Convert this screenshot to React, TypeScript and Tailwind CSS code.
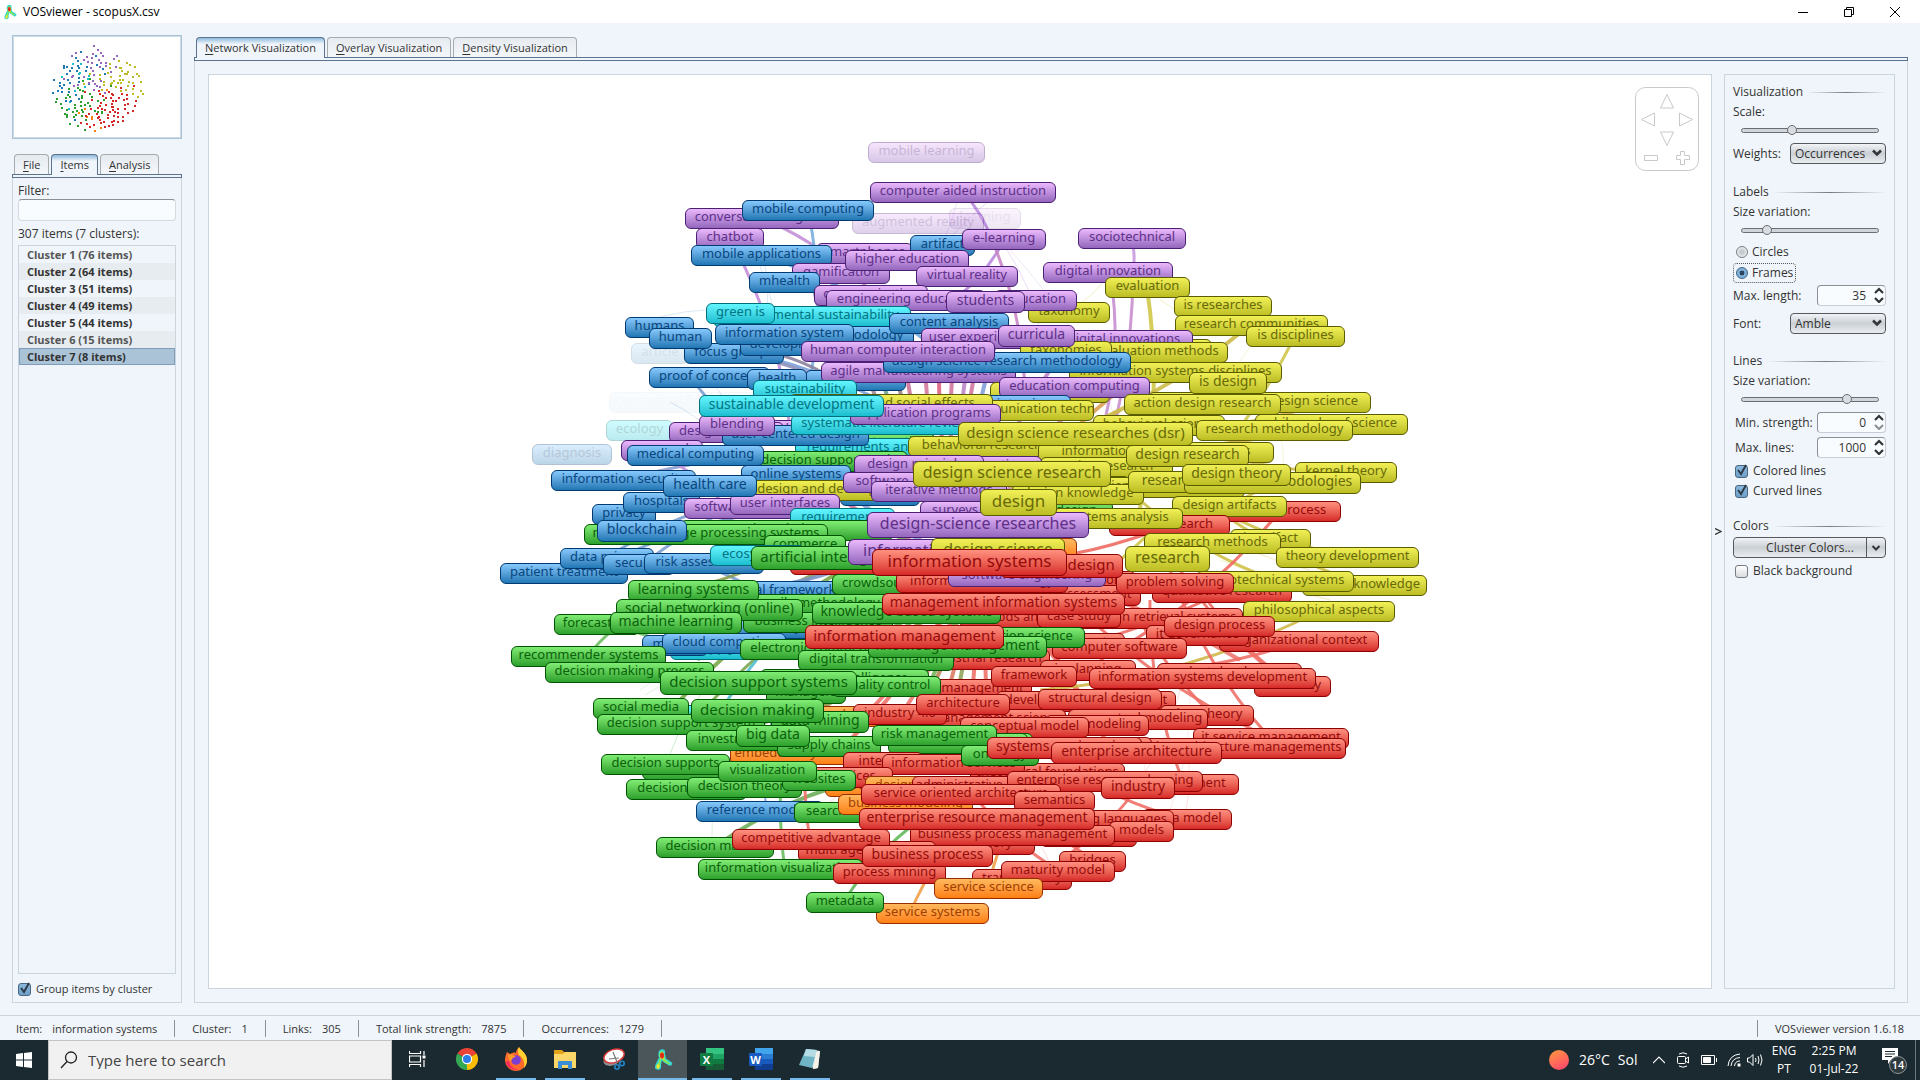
import React from "react";

type Color = "p" | "b" | "c" | "y" | "g" | "r" | "o";
type Tag = [Color, number, number, number, string, number?, number?];

const TONE: Record<Color, string> = {
  p: "from-[#ebb9fc] to-[#9467bd] border-[#4b1f74] text-[#5f3089]",
  b: "from-[#86c9fd] to-[#1f77b4] border-[#003a70] text-[#09467e]",
  c: "from-[#62f6ff] to-[#17becf] border-[#006f7c] text-[#007583]",
  y: "from-[#f1f056] to-[#bcbd22] border-[#5a5c00] text-[#686a08]",
  g: "from-[#80ee74] to-[#2ca02c] border-[#005300] text-[#0a620a]",
  r: "from-[#ff9080] to-[#d62728] border-[#8c0000] text-[#960b0b]",
  o: "from-[#ffb95c] to-[#ff7f0e] border-[#963000] text-[#a04000]",
};

const DOT: Record<Color, string> = {
  p: "#9467bd", b: "#1f77b4", c: "#17becf", y: "#bcbd22", g: "#2ca02c", r: "#d62728", o: "#ff7f0e",
};

const SIZE: Record<number, string> = {
  13: "h-[21px] text-[13px]",
  14: "h-[22px] text-[14px]",
  15: "h-[24px] text-[15px]",
  16: "h-[26px] text-[16px]",
  17: "h-[27px] text-[17px]",
};

const TAGS: Tag[] = [
  ["p", 388, 12, 117, "mobile learning", 13, 0.36],
  ["p", 469, 78, 72, "learning", 13, 0.15],
  ["p", 372, 83, 132, "augmented reality", 13, 0.3],
  ["b", 151, 213, 58, "article", 13, 0.17],
  ["b", 129, 262, 150, "conceptual framework", 13, 0.04],
  ["c", 126, 290, 67, "ecology", 13, 0.3],
  ["b", 52, 314, 80, "diagnosis", 13, 0.3],
  ["p", 336, 113, 97, "smartphones"],
  ["p", 205, 78, 154, "conversational agents"],
  ["b", 262, 70, 132, "mobile computing"],
  ["p", 390, 52, 186, "computer aided instruction"],
  ["p", 216, 98, 68, "chatbot"],
  ["b", 211, 115, 141, "mobile applications"],
  ["p", 312, 133, 98, "gamification"],
  ["b", 269, 142, 71, "mhealth"],
  ["b", 430, 105, 65, "artifact"],
  ["p", 365, 120, 124, "higher education"],
  ["p", 482, 99, 84, "e-learning"],
  ["p", 436, 136, 102, "virtual reality"],
  ["p", 334, 155, 114, "communication"],
  ["p", 346, 160, 160, "engineering education"],
  ["p", 598, 98, 108, "sociotechnical"],
  ["p", 563, 132, 130, "digital innovation"],
  ["y", 548, 172, 82, "taxonomy"],
  ["p", 514, 160, 83, "education"],
  ["p", 466, 161, 79, "students", 14],
  ["y", 625, 147, 85, "evaluation"],
  ["y", 694, 166, 98, "is researches"],
  ["y", 695, 185, 153, "research communities"],
  ["y", 766, 196, 99, "is disciplines"],
  ["c", 233, 176, 198, "environmental sustainability"],
  ["c", 226, 173, 69, "green is"],
  ["b", 145, 187, 69, "humans"],
  ["b", 204, 213, 100, "focus groups"],
  ["b", 169, 198, 63, "human"],
  ["b", 260, 205, 100, "development"],
  ["b", 331, 196, 103, "methodology"],
  ["b", 235, 194, 139, "information system"],
  ["b", 409, 183, 120, "content analysis"],
  ["p", 441, 198, 113, "user experience"],
  ["y", 650, 209, 82, "methods"],
  ["p", 575, 200, 138, "digital innovations"],
  ["y", 608, 212, 140, "evaluation methods"],
  ["y", 540, 211, 92, "taxonomies"],
  ["p", 518, 195, 77, "curricula", 14],
  ["y", 589, 232, 213, "information systems disciplines"],
  ["b", 325, 240, 101, "co-creation"],
  ["p", 341, 232, 195, "agile manufacturing systems"],
  ["y", 510, 252, 120, "technology"],
  ["p", 519, 247, 151, "education computing"],
  ["b", 403, 222, 248, "design science research methodology"],
  ["p", 321, 211, 194, "human computer interaction"],
  ["b", 169, 237, 121, "proof of concept"],
  ["b", 267, 239, 60, "health"],
  ["c", 273, 250, 104, "sustainability"],
  ["b", 505, 265, 86, "interviews"],
  ["y", 709, 242, 78, "is design", 14],
  ["y", 380, 270, 234, "information and communication techn"],
  ["y", 309, 264, 204, "economic and social effects"],
  ["p", 290, 290, 127, "design processes"],
  ["p", 189, 292, 115, "design thinking"],
  ["g", 370, 303, 85, "automation"],
  ["c", 315, 308, 158, "requirements analysis"],
  ["b", 242, 295, 147, "user centered design"],
  ["c", 311, 284, 188, "systematic literature review"],
  ["p", 370, 274, 151, "application programs"],
  ["c", 219, 265, 185, "sustainable development", 14],
  ["y", 668, 262, 150, "theory"],
  ["y", 776, 262, 115, "design science"],
  ["y", 644, 264, 157, "action design research"],
  ["y", 613, 285, 132, "behavioral science"],
  ["y", 775, 284, 153, "philosophy of science"],
  ["y", 716, 290, 157, "research methodology"],
  ["y", 478, 292, 235, "design science researches (dsr)", 15],
  ["p", 219, 285, 76, "blending"],
  ["p", 141, 310, 82, "proposal"],
  ["g", 270, 321, 158, "decision support tools"],
  ["b", 147, 315, 137, "medical computing"],
  ["y", 428, 306, 148, "behavioral research"],
  ["y", 558, 312, 236, "information systems strategies"],
  ["y", 560, 327, 133, "action research"],
  ["y", 560, 346, 90, "theory"],
  ["y", 560, 347, 205, "design science research (dsr)"],
  ["p", 462, 326, 100, "interaction"],
  ["p", 374, 325, 130, "design principles"],
  ["y", 646, 315, 123, "design research", 14],
  ["y", 815, 332, 102, "kernel theory"],
  ["y", 648, 341, 84, "research", 14],
  ["y", 704, 342, 177, "research methodologies", 14],
  ["y", 702, 334, 109, "design theory", 14],
  ["b", 261, 335, 110, "online systems"],
  ["b", 71, 340, 145, "information security"],
  ["b", 360, 355, 80, "innovation"],
  ["y", 267, 350, 172, "design and development"],
  ["b", 183, 345, 94, "health care", 14],
  ["p", 363, 342, 78, "software"],
  ["p", 391, 351, 136, "iterative methods"],
  ["y", 433, 331, 198, "design science research", 16],
  ["b", 112, 374, 64, "privacy"],
  ["b", 143, 362, 77, "hospitals"],
  ["p", 204, 368, 118, "software design"],
  ["p", 250, 364, 110, "user interfaces"],
  ["p", 440, 371, 70, "surveys"],
  ["g", 560, 371, 73, "design"],
  ["y", 532, 354, 132, "design knowledge"],
  ["r", 740, 371, 121, "design process"],
  ["y", 692, 366, 115, "design artifacts"],
  ["r", 629, 385, 121, "basic research"],
  ["y", 573, 378, 130, "systems analysis"],
  ["y", 500, 359, 77, "design", 17],
  ["c", 310, 378, 105, "requirements"],
  ["g", 200, 390, 213, "knowledge"],
  ["g", 104, 394, 244, "natural language processing systems"],
  ["b", 117, 390, 90, "blockchain", 14],
  ["g", 284, 405, 82, "commerce"],
  ["p", 387, 382, 222, "design-science researches", 16],
  ["y", 750, 399, 81, "it artifact"],
  ["y", 664, 403, 137, "research methods"],
  ["y", 796, 417, 143, "theory development"],
  ["y", 645, 416, 85, "research", 16],
  ["b", 20, 433, 128, "patient treatment"],
  ["b", 80, 418, 94, "data privacy"],
  ["b", 123, 424, 72, "security"],
  ["b", 164, 423, 120, "risk assessment"],
  ["c", 230, 415, 95, "ecosystems"],
  ["r", 310, 424, 120, "project"],
  ["g", 271, 416, 160, "artificial intelligence", 15],
  ["p", 368, 409, 150, "information use", 16],
  ["o", 520, 408, 77, "services"],
  ["y", 451, 408, 134, "design science", 16],
  ["r", 520, 424, 123, "product design", 15],
  ["r", 392, 419, 195, "information systems", 17],
  ["y", 822, 445, 125, "design knowledge"],
  ["r", 672, 452, 140, "qualitative research"],
  ["y", 716, 441, 158, "sociotechnical systems"],
  ["r", 560, 441, 96, "integration"],
  ["r", 570, 455, 91, "assessment"],
  ["r", 636, 443, 118, "problem solving"],
  ["y", 763, 471, 152, "philosophical aspects"],
  ["b", 207, 451, 160, "conceptual framework"],
  ["g", 270, 464, 145, "agile methodology"],
  ["g", 352, 444, 110, "crowdsourcing"],
  ["g", 148, 450, 131, "learning systems", 14],
  ["r", 416, 442, 172, "information technology"],
  ["p", 468, 436, 158, "software engineering"],
  ["b", 250, 488, 130, "analytics"],
  ["g", 263, 482, 150, "business intelligence"],
  ["g", 136, 469, 187, "social networking (online)", 14],
  ["g", 74, 484, 86, "forecasting"],
  ["g", 130, 482, 132, "machine learning", 14],
  ["r", 571, 478, 192, "information retrieval systems"],
  ["r", 480, 478, 140, "methods and models"],
  ["r", 557, 477, 84, "case study"],
  ["g", 332, 472, 189, "knowledge based systems", 14],
  ["r", 402, 463, 243, "management information systems", 14],
  ["r", 739, 501, 160, "organizational context"],
  ["r", 666, 495, 103, "it governance"],
  ["r", 684, 486, 111, "design process"],
  ["r", 590, 503, 55, "costs"],
  ["r", 572, 508, 135, "computer software"],
  ["g", 460, 497, 145, "information science"],
  ["c", 190, 509, 90, "supply"],
  ["b", 162, 505, 66, "models"],
  ["b", 182, 503, 124, "cloud computing"],
  ["r", 440, 519, 130, "industrial research"],
  ["g", 260, 509, 148, "electronic commerce"],
  ["g", 318, 520, 156, "digital transformation"],
  ["g", 388, 506, 179, "knowledge management", 14],
  ["r", 325, 495, 199, "information management", 15],
  ["g", 31, 516, 155, "recommender systems"],
  ["g", 65, 532, 169, "decision making process"],
  ["r", 560, 530, 96, "is planning"],
  ["r", 774, 546, 77, "efficiency"],
  ["r", 677, 533, 145, "product development"],
  ["r", 609, 538, 227, "information systems development"],
  ["r", 453, 549, 99, "management"],
  ["g", 286, 553, 80, "managers"],
  ["g", 280, 539, 169, "business intelligence"],
  ["g", 352, 546, 109, "quality control"],
  ["r", 511, 536, 86, "framework"],
  ["r", 516, 561, 180, "development environment"],
  ["r", 558, 559, 124, "structural design"],
  ["r", 446, 579, 140, "management science"],
  ["r", 680, 575, 94, "data theory"],
  ["r", 588, 579, 140, "conceptual modeling"],
  ["r", 565, 585, 104, "data modeling"],
  ["r", 480, 587, 129, "conceptual model"],
  ["o", 330, 576, 70, "value"],
  ["r", 373, 574, 94, "industry 4.0"],
  ["r", 436, 564, 94, "architecture"],
  ["g", 180, 541, 197, "decision support systems", 15],
  ["c", 195, 575, 60, "cities"],
  ["g", 113, 568, 96, "social media"],
  ["g", 117, 584, 168, "decision support system"],
  ["o", 250, 614, 128, "embedded systems"],
  ["g", 206, 600, 98, "investments"],
  ["g", 297, 606, 104, "supply chains"],
  ["g", 291, 581, 98, "data mining", 14],
  ["g", 256, 595, 74, "big data", 14],
  ["g", 211, 569, 133, "decision making", 15],
  ["g", 480, 603, 73, "trust"],
  ["g", 408, 603, 140, "risk analysis"],
  ["g", 392, 595, 125, "risk management"],
  ["r", 713, 598, 156, "it service management"],
  ["r", 625, 608, 241, "enterprise architecture managements"],
  ["r", 590, 607, 82, "standards"],
  ["r", 490, 633, 155, "theoretical foundations"],
  ["r", 363, 622, 80, "internet"],
  ["r", 402, 624, 143, "information services"],
  ["g", 481, 615, 78, "ontology"],
  ["r", 507, 607, 155, "systems engineering", 14],
  ["r", 571, 612, 171, "enterprise architecture", 14],
  ["g", 162, 629, 90, "websites"],
  ["g", 121, 624, 129, "decision supports"],
  ["g", 146, 649, 121, "decision models"],
  ["g", 207, 647, 115, "decision theory"],
  ["o", 345, 646, 70, "tools"],
  ["r", 330, 637, 83, "services"],
  ["g", 302, 640, 74, "websites"],
  ["g", 238, 631, 99, "visualization"],
  ["o", 385, 646, 80, "designing"],
  ["r", 432, 646, 125, "administrative data"],
  ["r", 650, 644, 109, "management"],
  ["r", 527, 641, 196, "enterprise resource planning"],
  ["r", 621, 647, 74, "industry", 14],
  ["b", 216, 671, 128, "reference models"],
  ["g", 314, 672, 116, "search engines"],
  ["o", 358, 664, 135, "business modeling"],
  ["r", 381, 654, 200, "service oriented architecture"],
  ["r", 534, 661, 81, "semantics"],
  ["r", 662, 679, 90, "data model"],
  ["r", 555, 680, 139, "modeling languages"],
  ["r", 560, 696, 97, "ontologies"],
  ["r", 629, 691, 65, "models"],
  ["r", 470, 704, 85, "theory"],
  ["r", 430, 695, 205, "business process management"],
  ["r", 379, 678, 236, "enterprise resource management", 14],
  ["g", 176, 707, 118, "decision makers"],
  ["r", 318, 711, 138, "multi agent systems"],
  ["r", 252, 699, 158, "competitive advantage"],
  ["g", 218, 729, 165, "information visualization"],
  ["r", 353, 733, 113, "process mining"],
  ["r", 382, 715, 131, "business process", 14],
  ["r", 579, 721, 67, "bridges"],
  ["r", 492, 739, 100, "transparency"],
  ["r", 521, 731, 114, "maturity model"],
  ["o", 454, 748, 109, "service science"],
  ["o", 396, 773, 113, "service systems"],
  ["g", 326, 762, 78, "metadata"],
];

const BY_SIZE = [...TAGS].sort((a, b) => (a[5] ?? 13) - (b[5] ?? 13));

/* x1, y1, x2, y2, colour, width */
const LINKS: [number, number, number, number, string, number][] = [
  [282, 88, 400, 170, "#c48fd9", 3], [250, 108, 310, 300, "#c48fd9", 3], [328, 80, 330, 250, "#7aaedd", 3],
  [281, 125, 470, 230, "#6fa5d8", 3], [330, 150, 345, 260, "#8c9cc4", 3], [483, 62, 512, 110, "#b98be0", 3],
  [524, 110, 480, 165, "#b98be0", 3], [512, 110, 545, 270, "#c985c4", 3], [652, 110, 653, 142, "#c79ae0", 3],
  [653, 142, 600, 400, "#c98fce", 3], [630, 142, 625, 290, "#c88fd4", 3], [667, 158, 655, 400, "#cfc84a", 4],
  [742, 176, 600, 260, "#cdbb4a", 4], [770, 195, 540, 320, "#cdbb4a", 4], [815, 206, 640, 430, "#cfc84a", 3],
  [748, 253, 560, 310, "#cfae4a", 5], [850, 272, 560, 300, "#d6b052", 3], [851, 294, 560, 310, "#d6b052", 3],
  [866, 342, 700, 310, "#cfb84a", 3], [867, 427, 690, 350, "#cfc14a", 3], [884, 455, 700, 350, "#cfc14a", 3],
  [795, 450, 660, 370, "#cfc14a", 3], [839, 481, 560, 560, "#cfb84a", 3], [800, 381, 620, 530, "#ee6a62", 3],
  [690, 395, 490, 433, "#ee6a62", 3], [732, 413, 520, 350, "#cfb84a", 4], [690, 428, 800, 350, "#cfc14a", 3],
  [742, 462, 500, 530, "#ee6a62", 3], [819, 511, 640, 540, "#ef7068", 3], [812, 556, 700, 440, "#ef7068", 3],
  [790, 608, 690, 440, "#ef7068", 3], [820, 560, 720, 460, "#ef7068", 3], [732, 585, 640, 450, "#ef7068", 3],
  [790, 608, 560, 440, "#ef7068", 3], [704, 654, 670, 470, "#ef7068", 3], [707, 690, 560, 620, "#ef7068", 3],
  [660, 654, 580, 730, "#ef7068", 3], [613, 730, 480, 600, "#ef7068", 3], [578, 740, 490, 660, "#ef7068", 3],
  [365, 770, 440, 690, "#62b85a", 3], [430, 783, 500, 680, "#f0a04a", 3], [508, 758, 560, 640, "#f0a04a", 3],
  [235, 717, 380, 650, "#6fae5a", 4], [305, 740, 315, 560, "#6cc060", 3], [330, 710, 335, 560, "#ee7068", 3],
  [286, 680, 300, 560, "#7a9ad8", 2], [117, 494, 220, 530, "#6cc060", 3], [108, 526, 160, 480, "#6cc060", 3],
  [200, 570, 440, 400, "#79a848", 4], [215, 590, 420, 430, "#7aa850", 3], [235, 590, 380, 430, "#52bccc", 3],
  [110, 443, 300, 380, "#7c9fd0", 3], [127, 428, 260, 370, "#7c9fd0", 3], [163, 434, 420, 310, "#7c9fd0", 3],
  [220, 434, 330, 500, "#7c9fd0", 3], [143, 350, 400, 330, "#8c9cd0", 3], [180, 325, 240, 370, "#c48fd9", 3],
  [209, 248, 240, 290, "#7c9fd0", 3], [182, 210, 400, 270, "#7aa0d8", 3], [254, 222, 400, 280, "#8f8fb8", 3],
  [290, 222, 370, 260, "#8a83a0", 3], [345, 400, 200, 460, "#8a9f50", 3], [400, 400, 250, 480, "#8a9f50", 5],
  [425, 410, 270, 460, "#7b95c8", 4], [440, 410, 290, 470, "#9586a8", 3], [490, 430, 340, 440, "#b59a4a", 4],
];

const HUBS: [number, number, number, number, string][] = [
  [490, 433, 270, 600, "#6fae50"], [490, 433, 290, 610, "#8a9f50"], [490, 433, 300, 560, "#5fb955"],
  [490, 433, 250, 590, "#6fae50"], [490, 433, 310, 600, "#9a9450"], [490, 433, 445, 620, "#d8735a"],
  [490, 433, 460, 620, "#8a9f50"], [490, 433, 478, 640, "#ee6a62"], [490, 433, 430, 600, "#b58050"],
  [490, 433, 500, 640, "#ee6a62"], [490, 433, 520, 620, "#d8735a"], [490, 433, 370, 610, "#ee6a62"],
  [490, 433, 380, 590, "#ee6a62"], [490, 433, 400, 640, "#6fae50"], [490, 433, 410, 600, "#ee7068"],
  [490, 433, 590, 600, "#ee6a62"], [490, 433, 620, 600, "#ee6a62"], [490, 433, 640, 640, "#ee6a62"],
  [490, 433, 425, 230, "#c96a90"], [490, 433, 445, 230, "#d07098"], [490, 433, 460, 220, "#d85a78"],
  [490, 433, 475, 220, "#d07098"], [490, 433, 490, 220, "#b880c8"], [490, 433, 500, 220, "#d07098"],
  [490, 433, 520, 200, "#7a9ad8"], [490, 433, 570, 240, "#b880c8"], [490, 433, 400, 240, "#6aa08a"],
  [490, 433, 415, 235, "#9a7a80"], [490, 433, 380, 220, "#9a8090"], [490, 433, 610, 260, "#d080b0"],
  [490, 433, 640, 260, "#d89a4a"], [490, 433, 660, 330, "#d89a4a"], [490, 433, 690, 325, "#d8a04a"],
  [490, 433, 700, 350, "#d8a04a"], [490, 433, 690, 360, "#d8904a"], [490, 433, 640, 280, "#d8a04a"],
  [490, 433, 620, 290, "#d8a04a"], [490, 433, 330, 330, "#8c9cd0"], [490, 433, 350, 360, "#c96a90"],
  [490, 433, 320, 380, "#c98070"], [490, 433, 780, 380, "#d8a04a"], [490, 433, 760, 530, "#ef7068"],
];

const FAINT: [number, number, number, number, string][] = [
  [438, 153, 520, 62, "#ead9f5"], [477, 72, 435, 160, "#f0e2f8"], [527, 120, 560, 200, "#eadcf6"],
  [530, 120, 640, 300, "#f0e6f8"], [280, 136, 300, 240, "#dbe8f5"], [285, 136, 285, 190, "#dbe8f5"],
  [145, 200, 225, 180, "#dbe8f5"], [190, 272, 240, 310, "#dbe8f5"], [228, 250, 245, 270, "#dbe8f5"],
  [720, 200, 560, 260, "#f0efc0"], [680, 170, 700, 185, "#f0efc0"], [625, 150, 590, 180, "#f0efc0"],
  [770, 217, 690, 300, "#f6f5da"], [800, 300, 800, 370, "#f6f5da"], [850, 470, 700, 400, "#f3e9c0"],
  [830, 440, 700, 380, "#f3e9c0"], [870, 460, 740, 430, "#f6f0d0"], [700, 560, 660, 650, "#fbe0dc"],
  [710, 560, 690, 680, "#fbe9e6"], [660, 570, 660, 680, "#fbe9e6"], [706, 610, 706, 680, "#fbe0dc"],
  [160, 560, 200, 540, "#dff3dc"], [165, 565, 215, 545, "#dff3dc"], [190, 624, 240, 540, "#cdeccb"],
  [232, 707, 235, 680, "#dff3dc"], [205, 390, 300, 440, "#dfe8ee"], [210, 440, 330, 400, "#dfeedd"],
  [100, 505, 140, 480, "#e6f5e4"], [560, 715, 570, 735, "#fbdcd8"], [320, 700, 400, 640, "#fbe0dc"],
];

const curve = (x1: number, y1: number, x2: number, y2: number) =>
  `M${x1} ${y1}Q${(x1 + x2) / 2 + (y2 - y1) * 0.1} ${(y1 + y2) / 2 - (x2 - x1) * 0.1} ${x2} ${y2}`;

function NetworkMap() {
  return (
    <div className="relative h-[804px] w-[960px] shrink-0">
      <svg className="absolute inset-0 h-full w-full" viewBox="0 0 960 804" fill="none" aria-hidden="true">
        {FAINT.map(([a, b, c, d, s], i) => <path key={i} d={curve(a, b, c, d)} stroke={s} strokeWidth="1" />)}
        {HUBS.map(([a, b, c, d, s], i) => <path key={i} d={curve(a, b, c, d)} stroke={s} strokeWidth="4" opacity="0.85" />)}
        {LINKS.map(([a, b, c, d, s, w], i) => <path key={i} d={curve(a, b, c, d)} stroke={s} strokeWidth={w} opacity="0.9" />)}
      </svg>
      {BY_SIZE.map(([c, x, y, w, t, s = 13, o = 1], i) => (
        <div
          key={i}
          className={`absolute flex items-center justify-center rounded-md border bg-linear-to-b pb-[3px] font-['Noto_Sans',sans-serif] leading-none whitespace-nowrap ${TONE[c]} ${SIZE[s]}`}
          style={{ left: x, top: y, width: w, opacity: o }}
        >
          {t}
        </div>
      ))}
    </div>
  );
}

function Overview() {
  return (
    <svg className="h-[104px] w-full border border-[#a9c3d6] bg-white outline outline-[#cfdae3] -outline-offset-2" viewBox="12 35 168 102" shapeRendering="crispEdges" role="img" aria-label="Overview">
      {TAGS.map(([c, x, y, w], i) => (
        <rect key={i} x={Math.round(92 + (x + w / 2 - 446) * 0.112)} y={Math.round(44 + (y - 12) * 0.1117)} width="2" height="2" fill={DOT[c]} />
      ))}
    </svg>
  );
}

function Logo({ size }: { size: string }) {
  return (
    <svg className={size} viewBox="0 0 20 22" aria-hidden="true">
      <path d="M8 1c3-1 5 1 4 4l1 5 6 4c1 2-1 4-3 3l-5-3-2-2-1 4c1 4-1 6-4 5-3 0-2-4-1-6l3-6C5 6 5 2 8 1z" fill="#35d6d0" />
      <path d="M8 3c2-1 3 1 3 3l1 5 5 4-1 1-5-3-3-3-1 7c0 3-3 4-3 1l3-8C6 7 6 4 8 3z" fill="#8fe84a" />
      <path d="M8 4l2 0 1 5-1 2-3-2z" fill="#f6d21c" />
      <ellipse cx="9" cy="7" rx="2" ry="3" fill="#e02a1a" />
      <ellipse cx="5" cy="18" rx="1.6" ry="2.2" fill="#f2e52c" />
    </svg>
  );
}

function MainTab({ label, active }: { label: string; active?: boolean }) {
  return (
    <button
      role="tab"
      aria-selected={!!active}
      className={
        active
          ? "relative z-10 -mb-px h-[21px] rounded-t border border-b-0 border-[#5b738f] bg-linear-to-b from-[#8fbbdc] via-[#eff5fa] via-30% to-[#eff5fa] px-2"
          : "h-5 rounded-t border border-b-0 border-[#a6abb0] bg-linear-to-b from-[#e6ebf0] to-[#f4f7fa] px-2"
      }
    >
      <span className="underline underline-offset-2">{label[0]}</span>
      {label.slice(1)}
    </button>
  );
}

function Section({ title }: { title: string }) {
  return (
    <h2 className="flex h-5 items-center gap-1">
      {title}
      <span className="h-px flex-1 bg-linear-to-r from-transparent via-[#777c82] to-transparent" />
    </h2>
  );
}

function Range({ label, value }: { label: string; value: number }) {
  return (
    <label className="block">
      <span className="block h-5 leading-5">{label}</span>
      <span className="flex h-4 items-center pr-[7px] pl-2">
        <input
          type="range"
          defaultValue={value}
          className="h-[5px] w-full appearance-none rounded-full border border-[#6a6e74] bg-[#d0d5da] [&::-webkit-slider-thumb]:h-[10px] [&::-webkit-slider-thumb]:w-[10px] [&::-webkit-slider-thumb]:appearance-none [&::-webkit-slider-thumb]:rounded-full [&::-webkit-slider-thumb]:border [&::-webkit-slider-thumb]:border-[#6a6e74] [&::-webkit-slider-thumb]:bg-[#d9dde1]"
        />
      </span>
    </label>
  );
}

function Choice({ label, value }: { label: string; value: string }) {
  return (
    <label className="flex h-[21px] items-center justify-between">
      {label}
      <span className="relative">
        <select className="block h-[21px] w-24 appearance-none rounded border border-[#55595f] bg-linear-to-b from-[#f2f4f6] via-[#cbd0d5] to-[#e9edf0] pl-1 leading-none">
          <option>{value}</option>
        </select>
        <svg className="pointer-events-none absolute top-[6px] right-[3px] h-2 w-3" viewBox="0 0 12 8" fill="none" aria-hidden="true">
          <path d="M2 1.500l4 4 4-4" stroke="#33373c" strokeWidth="2.6" />
        </svg>
      </span>
    </label>
  );
}

function Spin({ label, value, low }: { label: string; value: string; low?: boolean }) {
  return (
    <label className="flex h-[21px] items-center justify-between">
      {label}
      <span className="relative">
        <input defaultValue={value} className="block h-[21px] w-[69px] rounded border border-[#c6ccd2] border-t-[#8b9096] border-l-[#8b9096] bg-[#f9fcff] pr-[19px] text-right" />
        <svg className="pointer-events-none absolute top-[2px] right-[2px] h-4 w-[10px]" viewBox="0 0 10 16" fill="none" strokeWidth="2.2" aria-hidden="true">
          <path d="M1 6l4-4 4 4" stroke="#303338" />
          <path d="M1 11l4 4 4-4" stroke={low ? "#8e9296" : "#303338"} />
        </svg>
      </span>
    </label>
  );
}

function Check({ label, checked }: { label: string; checked?: boolean }) {
  return (
    <label className="flex h-5 items-center gap-[5px]">
      <span className="relative flex">
        <input
          type="checkbox"
          defaultChecked={checked}
          className="h-[13px] w-[13px] appearance-none rounded-[3px] border border-[#777c82] bg-linear-to-b from-white to-[#d8dcdf] checked:border-[#47657f] checked:from-[#8ab8dc] checked:to-[#6d9fc8]"
        />
        {checked && (
          <svg className="pointer-events-none absolute -top-px left-[2px] h-3 w-[11px]" viewBox="0 0 11 12" fill="none" aria-hidden="true">
            <path d="M1 6l3 4 5-9" stroke="#2f3a46" strokeWidth="2" />
          </svg>
        )}
      </span>
      {label}
    </label>
  );
}

function Radio({ label, checked }: { label: string; checked?: boolean }) {
  return (
    <label className={checked ? "flex h-5 w-fit items-center gap-1 rounded-sm border border-dotted border-[#555] px-[2px]" : "flex h-[22px] items-center gap-1 pl-[3px]"}>
      <input
        type="radio"
        name="shape"
        defaultChecked={checked}
        className="h-3 w-3 shrink-0 appearance-none rounded-full border border-[#777c82] bg-[radial-gradient(circle,#c4c9cd_25%,#eceff1_70%)] checked:border-[#3f6486] checked:bg-[radial-gradient(circle,#2b4560_30%,#7fb0d8_38%)]"
      />
      {label}
    </label>
  );
}

function Controls() {
  return (
    <aside className="flex w-[171px] shrink-0 flex-col border border-[#cbd5de] px-2 pt-[7px]">
      <Section title="Visualization" />
      <Range label="Scale:" value={36} />
      <div className="mt-[5px]"><Choice label="Weights:" value="Occurrences" /></div>
      <div className="mt-[18px]"><Section title="Labels" /></div>
      <Range label="Size variation:" value={16} />
      <div className="mt-[3px]">
        <Radio label="Circles" />
        <Radio label="Frames" checked />
      </div>
      <div className="mt-[2px]"><Spin label="Max. length:" value="35" /></div>
      <div className="mt-[7px]"><Choice label="Font:" value="Amble" /></div>
      <div className="mt-[17px]"><Section title="Lines" /></div>
      <Range label="Size variation:" value={79} />
      <div className="mt-[5px] flex flex-col gap-1 pl-[2px]">
        <Spin label="Min. strength:" value="0" low />
        <Spin label="Max. lines:" value="1000" />
      </div>
      <div className="mt-[3px] pl-[2px]">
        <Check label="Colored lines" checked />
        <Check label="Curved lines" checked />
      </div>
      <div className="mt-[15px]"><Section title="Colors" /></div>
      <div className="mt-px flex h-[21px] rounded border border-[#55595f] bg-linear-to-b from-[#f2f4f6] via-[#cbd0d5] to-[#e9edf0]">
        <button className="flex-1 pl-5 leading-none">Cluster Colors...</button>
        <button className="flex w-[19px] items-center justify-center border-l border-[#55595f]" aria-label="More colors">
          <svg className="h-2 w-[10px]" viewBox="0 0 10 8" fill="none" aria-hidden="true"><path d="M1.500 2l3.500 3.500L8.500 2" stroke="#33373c" strokeWidth="2" /></svg>
        </button>
      </div>
      <div className="mt-[3px] pl-[2px]"><Check label="Black background" /></div>
    </aside>
  );
}

const CLUSTERS: [string, boolean][] = [
  ["Cluster 1 (76 items)", true], ["Cluster 2 (64 items)", false], ["Cluster 3 (51 items)", false],
  ["Cluster 4 (49 items)", false], ["Cluster 5 (44 items)", false], ["Cluster 6 (15 items)", true],
];

function Sidebar() {
  return (
    <div className="flex w-[170px] shrink-0 flex-col">
      <Overview />
      <div className="mt-[15px] flex h-5 items-end gap-[2px] pl-[2px] text-[11px]" role="tablist">
        <MainTab label="File" />
        <MainTab label="Items" active />
        <MainTab label="Analysis" />
      </div>
      <div className="h-1 border border-[#5b738f]" />
      <div className="flex flex-1 flex-col border border-t-0 border-[#cbd5de] px-[5px]">
        <label className="mt-1 block leading-[17px]">
          Filter:
          <input className="block h-[22px] w-full rounded border border-[#d4dadf] border-t-[#8b9096] bg-[#f8fcff]" />
        </label>
        <div className="mt-[3px] h-[21px] leading-5">307 items (7 clusters):</div>
        <ul className="mb-[5px] flex-1 border border-[#cbd5de] text-[11px] font-bold">
          {CLUSTERS.map(([t, dim], i) => (
            <li key={t} className={`h-[17px] pl-2 leading-[17px] ${i % 2 ? "bg-[#e6ecf0]" : ""} ${dim ? "text-[#555]" : "text-[#333]"}`}>{t}</li>
          ))}
          <li className="h-[17px] border border-[#7f9db9] bg-[#abc3d7] pl-[7px] leading-[15px] text-[#333]">Cluster 7 (8 items)</li>
        </ul>
        <div className="mb-[3px] text-[11px]"><Check label="Group items by cluster" checked /></div>
      </div>
    </div>
  );
}

function Navigator() {
  return (
    <svg className="absolute top-[12px] right-[11px] h-[85px] w-[65px]" viewBox="0 0 65 85" fill="none" stroke="#c9c9c9" aria-hidden="true">
      <rect x="0.5" y="0.5" width="63" height="83" rx="10" />
      <path d="M32 7.500l6.500 13.500h-13zM32 58.500l6.500-13.500h-13zM6.500 32.500l13-6.500v13zM57.500 32.500l-13-6.500v13z" />
      <path d="M9.500 68.500h13v5h-13zM45.500 64.500h4v4h5v4h-5v5h-4v-5h-4v-4h4z" />
    </svg>
  );
}

const STATUS = [["Item:", "information systems"], ["Cluster:", "1"], ["Links:", "305"], ["Total link strength:", "7875"], ["Occurrences:", "1279"]];

function TaskButton({ label, open, active, children }: { label: string; open?: boolean; active?: boolean; children: React.ReactNode }) {
  return (
    <button aria-label={label} className={`flex h-10 w-[49px] flex-col items-center ${active ? "bg-[#4a5659]" : ""}`}>
      <span className="flex flex-1 items-center">{children}</span>
      <span className={`h-[2px] ${active ? "w-full" : "w-10"} ${open ? "bg-[#76b9ed]" : ""}`} />
    </button>
  );
}

function Office({ letter, a, b, c, d }: { letter: string; a: string; b: string; c: string; d: string }) {
  return (
    <svg className="h-[22px] w-6" viewBox="0 0 24 22" aria-hidden="true">
      <path d="M6 0h18v6H6z" fill={a} /><path d="M6 6h18v5H6z" fill={b} /><path d="M6 11h18v5H6z" fill={c} /><path d="M6 16h18v6H6z" fill={d} />
      <rect y="5" width="13" height="13" rx="1" fill={c} />
      <text x="6.500" y="15.500" fontSize="11" fontWeight="700" fill="#fff" textAnchor="middle" fontFamily="Open Sans, sans-serif">{letter}</text>
    </svg>
  );
}

function Taskbar() {
  return (
    <footer className="flex h-10 shrink-0 items-center bg-[#1a2a30] text-white">
      <button aria-label="Start" className="flex h-10 w-12 items-center justify-center">
        <svg className="h-4 w-4" viewBox="0 0 16 16" fill="#fff" aria-hidden="true"><path d="M0 2l7-1v6.500H0zM8 1l8-1v7.500H8zM0 8.500h7V15l-7-1zM8 8.500h8V16l-8-1z" /></svg>
      </button>
      <label className="flex h-10 w-[344px] items-center border border-[#c4c4c4] bg-[#f1f1f1] pl-[11px] text-[#333]">
        <svg className="h-[18px] w-[18px]" viewBox="0 0 18 18" fill="none" stroke="#222" strokeWidth="1.300" aria-hidden="true"><circle cx="11" cy="6.500" r="5.500" /><path d="M7 10.500L1 17" /></svg>
        <input aria-label="Search" placeholder="Type here to search" className="ml-[10px] flex-1 bg-transparent text-[15px] outline-none placeholder:text-[#444]" />
      </label>
      <nav className="flex pl-px">
        <TaskButton label="Task view">
          <svg className="h-4 w-[17px]" viewBox="0 0 17 16" fill="none" stroke="#fff" aria-hidden="true"><path d="M.5 0v2.500h11V0M.5 16v-2.500h11V16M.5 5h11v6H.5zM15 0v4M15 9v7" strokeWidth="1.200" /><path d="M13.500 4.500h3v3h-3z" fill="#fff" stroke="none" /></svg>
        </TaskButton>
        <TaskButton label="Chrome">
          <svg className="h-[22px] w-[22px]" viewBox="0 0 24 24" aria-hidden="true">
            <path d="M12 12L1.600 6A12 12 0 0122.400 6z" fill="#ea4335" /><path d="M12 12L22.400 6A12 12 0 0112 24z" fill="#fbbc05" /><path d="M12 12v12A12 12 0 011.600 6z" fill="#34a853" />
            <path d="M12 6.500h10.700L22.400 6H12z" fill="#ea4335" /><circle cx="12" cy="12" r="5.600" fill="#fff" /><circle cx="12" cy="12" r="4.400" fill="#2f7de9" />
          </svg>
        </TaskButton>
        <TaskButton label="Firefox" open>
          <svg className="h-6 w-6" viewBox="0 0 24 24" aria-hidden="true">
            <path d="M3 5l3 2c2-1 4-2 6-1 0-3 2-5 3-6 1 3 8 6 8 13 0 6-5 11-11 11S1 19 1 13c0-3 1-6 2-8z" fill="#ff6a2b" />
            <path d="M15 0c1 3 8 6 8 13 0 3-1 6-3 8 1-6-1-10-4-12-2-2-3-5-1-9z" fill="#ffd232" /><path d="M2 16c2 5 7 8 13 7-6-1-9-4-10-9-2 0-3 0-3 2z" fill="#f5285f" />
            <circle cx="12" cy="13" r="4.800" fill="#7a3fd0" /><path d="M4 8c4-2 6 1 8 2-3 0-4 2-5 4-2-1-3-3-3-6z" fill="#ff9a2a" />
          </svg>
        </TaskButton>
        <TaskButton label="File Explorer" open>
          <svg className="h-5 w-[22px]" viewBox="0 0 22 20" aria-hidden="true"><path d="M0 1h8l2 2h12v15H0z" fill="#e3a21a" /><path d="M0 5h9l2-2h11v16H0z" fill="#fcd669" /><path d="M4 20v-7q0-1 1-1h12q1 0 1 1v7h-4v-4H8v4z" fill="#3b8fd6" /></svg>
        </TaskButton>
        <TaskButton label="Snipping Tool">
          <svg className="h-[22px] w-6" viewBox="0 0 24 22" fill="none" aria-hidden="true">
            <ellipse cx="11" cy="11" rx="10" ry="6" transform="rotate(-25 11 11)" fill="#8f8f8f" /><ellipse cx="12" cy="8" rx="10.500" ry="6.500" transform="rotate(-20 12 8)" fill="#fff" stroke="#d83a3a" strokeWidth="1.500" />
            <path d="M11 4l4 10M7 11l10-1" stroke="#777" strokeWidth="1.200" /><circle cx="15" cy="19" r="2.200" stroke="#2285c8" strokeWidth="1.600" /><circle cx="20" cy="15.500" r="2.200" stroke="#2285c8" strokeWidth="1.600" />
          </svg>
        </TaskButton>
        <TaskButton label="VOSviewer" open active><Logo size="h-[23px] w-5" /></TaskButton>
        <TaskButton label="Excel" open><Office letter="X" a="#33c481" b="#21a366" c="#107c41" d="#185c37" /></TaskButton>
        <TaskButton label="Word" open><Office letter="W" a="#41a5ee" b="#2b7cd3" c="#185abd" d="#103f91" /></TaskButton>
        <TaskButton label="Notepad" open>
          <svg className="h-[22px] w-[22px]" viewBox="0 0 22 22" aria-hidden="true"><path d="M7 1l14 2-2 17-5 1z" fill="#dfe6e8" /><path d="M7 1l11 1-5 18L0 17z" fill="#6fb5c6" /><path d="M7 1l11 1-2 7-11-1z" fill="#b5dbe4" /><path d="M17 4l4-1-2 17-5 1z" fill="#f5f2e8" /></svg>
        </TaskButton>
      </nav>
      <div className="ml-auto flex h-10 items-center text-[12px]">
        <svg className="h-5 w-5" viewBox="0 0 20 20" aria-hidden="true">
          <defs><linearGradient id="sun" x1="0" y1="0" x2="0.5" y2="1"><stop stopColor="#ff9a3c" /><stop offset="1" stopColor="#ff4f6a" /></linearGradient></defs>
          <circle cx="10" cy="10" r="10" fill="url(#sun)" />
        </svg>
        <span className="ml-[10px] flex w-[74px] gap-2 text-[14px]"><span>26°C</span><span>Sol</span></span>
        <svg className="h-3 w-3" viewBox="0 0 12 12" fill="none" stroke="#fff" strokeWidth="1.200" aria-hidden="true"><path d="M0 9l6-6 6 6" /></svg>
        <svg className="ml-3 h-4 w-3" viewBox="0 0 12 16" fill="none" stroke="#fff" aria-hidden="true"><path d="M2 2q4-2.500 8 0M2 14q4 2.500 8 0" /><rect x=".5" y="4.500" width="8" height="7" rx="1" /><path d="M8.500 7l3-2v6l-3-2" /></svg>
        <svg className="ml-3 h-[10px] w-4" viewBox="0 0 16 10" fill="none" stroke="#fff" aria-hidden="true"><path d="M.5.5h13v9H.5zM15.500 3v4" /><path d="M2.500 2.500h7v5h-7z" fill="#fff" /></svg>
        <svg className="ml-[10px] h-[14px] w-[14px]" viewBox="0 0 14 14" fill="none" stroke="#fff" aria-hidden="true"><path d="M1 13Q2 2 13 1M4 13Q5 5 13 4.500M7.500 13Q8 8 13 8" /><path d="M10.500 10.500h3v3h-3z" fill="#fff" stroke="none" /></svg>
        <svg className="ml-[6px] h-[14px] w-4" viewBox="0 0 16 14" fill="none" stroke="#fff" aria-hidden="true"><path d="M.5 5h2l3.500-3.500v11L2.500 9h-2zM8.500 5q1 2 0 4M11 3q2 4 0 8M13.500 1.500q3 5.500 0 11" /></svg>
        <span className="ml-[7px] w-7 text-center leading-[18px]">ENG<br />PT</span>
        <span className="ml-2 w-[56px] text-center leading-[18px] whitespace-nowrap">2:25 PM<br />01-Jul-22</span>
        <span className="relative ml-5 h-6 w-[27px]">
          <svg className="h-4 w-4" viewBox="0 0 16 16" aria-hidden="true"><path d="M0 0h16v12H9l-3 4v-4H0z" fill="#fff" /><path d="M3 3.500h10M3 6h10M3 8.500h7" stroke="#1a2a30" /></svg>
          <span className="absolute right-[2px] bottom-[-2px] flex h-[18px] w-[18px] items-center justify-center rounded-full border border-[#8d9496] bg-[#2f3a3e] text-[11px] font-semibold">14</span>
        </span>
        <span className="ml-[6px] h-10 w-[5px] border-l border-[#6d777a]" />
      </div>
    </footer>
  );
}

export default function App() {
  return (
    <div className="flex h-screen flex-col bg-[#eff5fa] font-['Open_Sans',sans-serif] text-[12px] leading-[18px] text-[#333]">
      <header className="flex h-[23px] shrink-0 items-center bg-white pr-[2px] pl-[3px] text-black">
        <Logo size="h-4 w-[14px]" />
        <h1 className="ml-[6px]">VOSviewer - scopusX.csv</h1>
        <div className="ml-auto flex h-5 items-center">
          <button aria-label="Minimize" className="flex w-[46px] justify-center"><svg className="h-[10px] w-[10px]" viewBox="0 0 10 10" stroke="#000"><path d="M0 5.500h10" /></svg></button>
          <button aria-label="Restore" className="flex w-[46px] justify-center"><svg className="h-[10px] w-[10px]" viewBox="0 0 10 10" fill="none" stroke="#000"><path d="M.5 2.500h7v7h-7zM2.500 2.500v-2h7v7h-2" /></svg></button>
          <button aria-label="Close" className="flex w-[46px] justify-center"><svg className="h-[10px] w-[10px]" viewBox="0 0 10 10" stroke="#000"><path d="M0 0l10 10M10 0L0 10" /></svg></button>
        </div>
      </header>
      <div className="flex min-h-0 flex-1 gap-3 px-3 pt-3 pb-3">
        <Sidebar />
        <div className="flex min-w-0 flex-1 flex-col pt-[2px]">
          <div className="flex h-5 items-end gap-[2px] pl-[2px] text-[11px]" role="tablist">
            <MainTab label="Network Visualization" active />
            <MainTab label="Overlay Visualization" />
            <MainTab label="Density Visualization" />
          </div>
          <div className="h-1 border border-[#5b738f]" />
          <div className="flex min-h-0 flex-1 border border-t-0 border-[#cbd5de] py-[13px] pr-3 pl-[13px]">
            <main className="relative flex min-w-0 flex-1 items-center justify-center overflow-hidden border border-[#cbd5de] bg-white">
              <NetworkMap />
              <Navigator />
            </main>
            <button aria-label="Collapse panel" className="flex w-3 items-center justify-center">
              <svg className="h-[7px] w-[7px]" viewBox="0 0 7 7" fill="none" stroke="#333" strokeWidth="1.300"><path d="M0 .5l6 3-6 3" /></svg>
            </button>
            <Controls />
          </div>
        </div>
      </div>
      <div className="flex h-[25px] shrink-0 items-center border-t border-[#cbd5de] pt-px pl-4 text-[11px]">
        {STATUS.map(([k, v]) => (
          <React.Fragment key={k}>
            <span>{k}</span>
            <span className="ml-[10px]">{v}</span>
            <span className="mx-[17px] h-[17px] w-px bg-[#8b9096]" />
          </React.Fragment>
        ))}
        <span className="ml-auto h-[17px] w-px bg-[#8b9096]" />
        <span className="mr-4 ml-[17px]">VOSviewer version 1.6.18</span>
      </div>
      <Taskbar />
    </div>
  );
}
